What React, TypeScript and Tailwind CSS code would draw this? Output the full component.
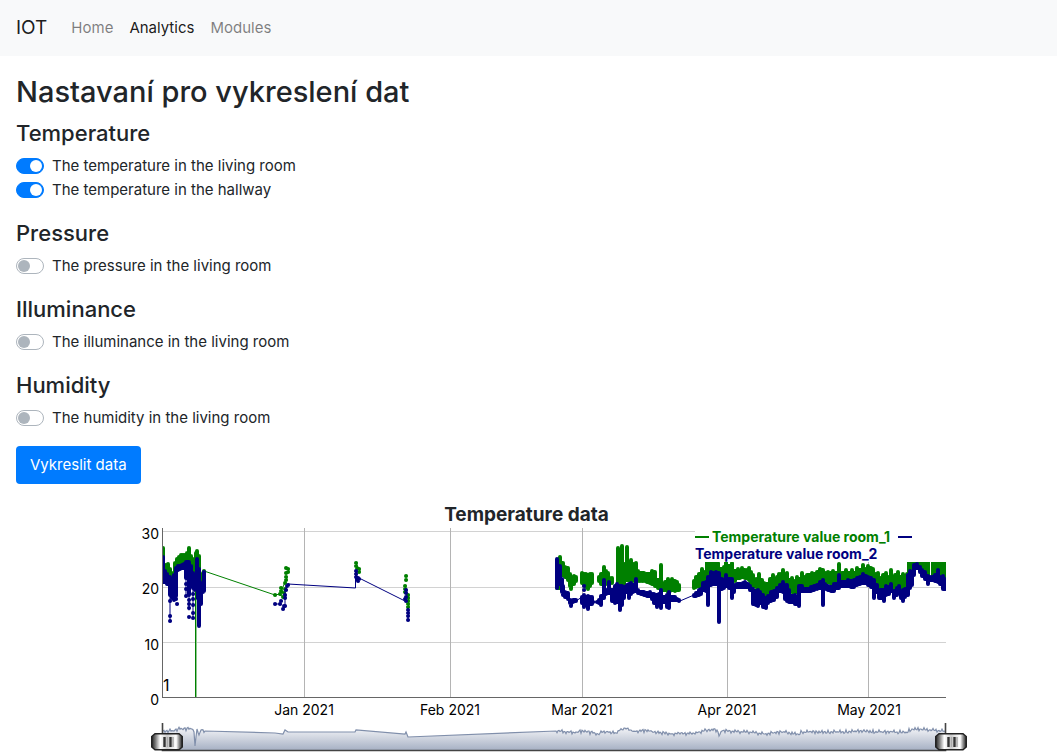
import React from "react";

type Band = [x: number, top: number, bottom: number];
type Point = [x: number, y: number];

const ROOM_1: Band[] = [
  [163, 546, 575], [165, 563, 580], [168, 562, 578], [170, 567, 582], [172, 571, 585], [174, 575, 583],
  [175, 561, 580], [177, 557, 572], [179, 555, 568], [181, 553, 566], [183, 553, 564], [185, 553, 562],
  [187, 551, 562], [189, 546, 560], [191, 554, 568], [193, 557, 570], [195, 560, 575], [196, 551, 575],
  [197, 549, 570], [199, 554, 575], [201, 573, 587], [203, 571, 582], [204, 569, 575],
  [557, 560, 590], [560, 555, 590], [563, 561, 577], [565, 565, 579], [568, 566, 582], [570, 572, 588],
  [571, 575, 591], [574, 574, 586], [576, 575, 583],
  [582, 571, 585], [584, 572, 587], [586, 572, 589], [588, 573, 591], [590, 572, 588], [592, 572, 585],
  [599, 575, 583], [601, 572, 586], [604, 565, 587], [606, 569, 586], [608, 571, 584], [612, 576, 585],
  [618, 546, 590], [620, 552, 588], [622, 544, 590], [624, 562, 586], [627, 545, 582], [629, 560, 582],
  [631, 558, 582], [633, 562, 583], [636, 561, 582], [638, 569, 583], [641, 571, 583], [644, 571, 583],
  [647, 572, 584], [650, 572, 585], [652, 569, 586], [655, 570, 588], [658, 578, 590], [661, 563, 593],
  [663, 582, 592], [665, 580, 592], [668, 577, 594], [670, 580, 593], [672, 577, 592], [675, 579, 593],
  [677, 580, 592], [679, 583, 592],
  [694, 579, 590], [696, 575, 589], [699, 572, 588], [702, 567, 588], [704, 570, 585], [707, 560, 580],
  [710, 560, 580], [713, 560, 580], [716, 560, 580], [718, 561, 580], [721, 567, 582], [724, 565, 580],
  [726, 560, 580], [729, 564, 580], [732, 561, 580], [735, 569, 583], [738, 567, 580], [740, 569, 580],
  [742, 566, 579], [745, 568, 580], [749, 566, 582], [751, 570, 586], [753, 573, 588], [757, 577, 590],
  [759, 572, 590], [762, 578, 594], [764, 581, 597], [767, 582, 598], [770, 577, 595], [773, 573, 592],
  [775, 577, 590], [777, 575, 589], [779, 572, 586], [783, 568, 584], [785, 572, 585], [787, 571, 588],
  [790, 578, 592], [792, 576, 594], [794, 579, 595], [797, 575, 594], [799, 577, 588], [802, 571, 586],
  [804, 575, 588], [807, 573, 588], [810, 573, 588], [812, 571, 587], [815, 572, 586], [817, 570, 585],
  [820, 567, 584], [823, 568, 583], [825, 571, 584], [828, 570, 584], [831, 571, 586], [833, 569, 585],
  [836, 571, 584], [839, 562, 580], [841, 571, 582], [844, 571, 582], [846, 568, 581], [849, 571, 581],
  [852, 568, 580], [855, 571, 580], [857, 566, 579], [860, 568, 578], [863, 563, 578], [865, 567, 578],
  [868, 564, 578], [871, 566, 580], [873, 567, 583], [875, 572, 585], [878, 571, 588], [880, 576, 590],
  [883, 573, 590], [886, 571, 588], [888, 575, 587], [891, 568, 585], [893, 576, 590], [895, 573, 592],
  [898, 570, 588], [901, 575, 590], [903, 572, 592], [905, 577, 590], [907, 572, 588], [909, 560, 580],
  [911, 560, 576], [914, 560, 572], [917, 560, 570], [920, 560, 572], [923, 560, 576], [926, 560, 580],
  [928, 560, 582], [933, 560, 578], [936, 560, 578], [939, 560, 576], [942, 560, 578], [945, 560, 582],
];

const ROOM_2: Band[] = [
  [163, 555, 584], [165, 569, 584], [167, 572, 586], [170, 575, 597], [172, 580, 600], [174, 573, 602],
  [176, 566, 598], [178, 564, 572], [180, 564, 571], [182, 563, 570], [184, 562, 570], [186, 560, 580],
  [189, 560, 597], [191, 564, 583], [193, 571, 590], [195, 574, 592], [197, 557, 605], [199, 567, 628],
  [201, 588, 606], [203, 580, 594], [204, 570, 593],
  [557, 557, 590], [560, 564, 586], [562, 577, 594], [563, 584, 597], [565, 590, 599], [568, 591, 601],
  [570, 598, 605], [571, 600, 608], [573, 598, 604], [576, 598, 603],
  [582, 595, 605], [584, 593, 609], [586, 595, 607], [588, 594, 611], [590, 595, 606], [592, 595, 606],
  [599, 598, 605], [601, 594, 607], [604, 578, 600], [606, 588, 596], [609, 580, 595], [612, 588, 603],
  [615, 584, 605], [617, 582, 604], [620, 584, 612], [622, 584, 607], [624, 585, 600], [627, 583, 594],
  [629, 582, 600], [631, 581, 596], [633, 583, 594], [636, 577, 593], [638, 588, 595], [641, 590, 596],
  [644, 590, 597], [647, 591, 598], [650, 590, 598], [652, 592, 601], [654, 592, 605], [657, 593, 609],
  [659, 592, 604], [661, 588, 610], [664, 595, 604], [667, 593, 609], [669, 590, 610], [672, 595, 602],
  [675, 595, 602], [677, 597, 602], [679, 598, 602],
  [694, 593, 597], [696, 591, 598], [699, 588, 597], [701, 587, 596], [703, 581, 592], [706, 580, 593],
  [708, 575, 607], [711, 570, 587], [713, 571, 586], [716, 570, 586], [719, 571, 624], [722, 577, 591],
  [724, 578, 590], [726, 573, 588], [729, 577, 590], [732, 577, 600], [734, 583, 594], [737, 582, 589],
  [740, 582, 589], [743, 581, 589], [745, 580, 589], [748, 582, 589], [750, 584, 592], [753, 587, 606],
  [756, 589, 607], [758, 588, 608], [760, 590, 605], [763, 593, 609], [766, 596, 610], [768, 594, 605],
  [771, 590, 603], [774, 589, 602], [777, 586, 599], [780, 583, 593], [783, 580, 594], [785, 583, 601],
  [787, 583, 603], [789, 588, 604], [792, 594, 604], [795, 593, 606], [797, 596, 606], [799, 584, 608],
  [802, 584, 593], [805, 587, 593], [808, 587, 593], [811, 585, 593], [814, 584, 592], [817, 583, 591],
  [820, 580, 590], [823, 578, 607], [825, 582, 591], [828, 584, 592], [831, 585, 593], [834, 582, 593],
  [836, 582, 590], [839, 573, 590], [842, 580, 588], [845, 580, 588], [848, 578, 588], [851, 579, 589],
  [854, 578, 589], [857, 576, 587], [860, 575, 586], [863, 572, 585], [866, 574, 585], [868, 575, 587],
  [871, 576, 589], [874, 578, 600], [877, 583, 594], [879, 588, 600], [881, 588, 600], [884, 588, 603],
  [886, 584, 597], [889, 585, 596], [891, 582, 593], [894, 589, 600], [897, 586, 597], [899, 584, 593],
  [901, 589, 600], [903, 588, 603], [905, 587, 599], [908, 573, 597], [910, 569, 590], [912, 570, 587],
  [914, 563, 577], [917, 562, 570], [920, 565, 574], [922, 568, 578], [925, 570, 581], [928, 574, 586],
  [932, 575, 582], [935, 573, 583], [938, 568, 584], [940, 575, 586], [943, 574, 591], [945, 577, 591],
];

const ROOM_1_SPARSE: Point[] = [
  [275, 595], [280, 594], [281, 591], [281, 588], [283, 597], [284, 593], [285, 589], [285, 583], [286, 580],
  [286, 577], [286, 573], [286, 568], [288, 569], [288, 572], [356, 563], [356, 566], [357, 568], [359, 569],
  [359, 572], [406, 576], [406, 580], [405, 586], [405, 589], [405, 592], [408, 595], [408, 598], [408, 601],
  [408, 604], [408, 607],
];

const ROOM_2_SPARSE: Point[] = [
  [170, 601], [170, 616], [170, 621], [176, 599], [177, 604], [189, 600], [189, 604], [189, 608], [189, 617],
  [186, 584], [186, 589], [186, 596], [193, 594], [193, 599], [193, 605], [193, 613], [193, 618], [275, 604],
  [280, 604], [281, 601], [283, 609], [284, 606], [285, 606], [285, 598], [285, 595], [286, 590], [287, 586],
  [288, 585], [356, 571], [356, 574], [356, 577], [357, 580], [358, 578], [358, 581], [359, 579], [406, 590],
  [406, 593], [406, 597], [405, 599], [406, 601], [408, 610], [408, 613], [408, 616], [408, 620], [584, 586],
  [584, 590], [593, 602], [597, 602],
];

const OVERVIEW_BASE: Point[] = [
  [163, 731], [174, 731], [178, 729], [192, 729], [194, 732], [195, 746], [197, 729], [199, 735], [201, 730],
  [205, 731], [275, 733], [283, 734], [285, 730], [288, 732], [355, 732], [356, 730], [405, 734], [406, 732],
  [408, 737], [556, 731], [575, 733], [583, 731], [598, 734], [604, 731], [616, 733], [620, 730], [626, 729],
  [632, 731], [650, 731], [661, 733], [680, 734], [693, 733], [708, 730], [717, 730], [719, 736], [722, 731],
  [750, 732], [765, 734], [783, 732], [798, 734], [802, 732], [839, 732], [863, 731], [882, 732], [906, 732],
  [912, 729], [920, 729], [932, 730], [945, 731],
];

const QUIET_FROM = 205;
const QUIET_TO = 556;

function overviewPoints(): Point[] {
  const out: Point[] = [];
  OVERVIEW_BASE.forEach(([x, y], i) => {
    out.push([x, y]);
    const next = OVERVIEW_BASE[i + 1];
    if (!next || (x >= QUIET_FROM && x < QUIET_TO)) return;
    for (let px = x + 1; px < next[0]; px += 1) {
      const t = (px - x) / (next[0] - x);
      const ripple = Math.sin(px * 2.1) * 1.1 + Math.sin(px * px * 0.7) * 0.9;
      out.push([px, y + (next[1] - y) * t + ripple]);
    }
  });
  return out;
}

function bandPath(bands: Band[]): string {
  const parts: string[] = [];
  bands.forEach(([x, top, bottom], i) => {
    parts.push(`M${x} ${top + 2}V${Math.max(bottom - 2, top + 3)}`);
    const next = bands[i + 1];
    if (next && next[0] - x <= 4) {
      const a = Math.max(top, next[1]) + 2;
      const b = Math.min(bottom, next[2]) - 2;
      if (b > a) parts.push(`M${(x + next[0]) / 2} ${a}V${b}`);
    }
  });
  return parts.join("");
}

const dotPath = (points: Point[]) => points.map(([x, y]) => `M${x} ${y}h.1`).join("");

const overview = "M" + overviewPoints().map(([x, y]) => `${x} ${y.toFixed(1)}`).join("L");

function Handle({ x }: { x: number }) {
  return (
    <g transform={`translate(${x} 733)`}>
      <path d="M4 .7H28L31.3 3.5V14L28 16.8H4L.7 14V3.5Z" fill="url(#metal)" stroke="#222" strokeWidth="1.4" />
      <path d="M13.5 4V14M19.5 4V14" stroke="#333" strokeWidth="2.4" />
      <path d="M16.5 4V14M22 4V14" stroke="#aaa" strokeWidth="1.6" />
    </g>
  );
}

function TemperatureChart() {
  return (
    <svg viewBox="106 528 861 224" className="block w-full overflow-visible" role="img" aria-label="Temperature data">
      <defs>
        <linearGradient id="range" x1="0" y1="0" x2="0" y2="1">
          <stop offset="0" stopColor="#f4f5f8" />
          <stop offset="1" stopColor="#a7b1c4" />
        </linearGradient>
        <linearGradient id="metal">
          <stop offset="0" stopColor="#222" />
          <stop offset=".12" stopColor="#777" />
          <stop offset=".28" stopColor="#fff" />
          <stop offset=".5" stopColor="#ccc" />
          <stop offset=".8" stopColor="#fff" />
          <stop offset=".9" stopColor="#888" />
          <stop offset="1" stopColor="#222" />
        </linearGradient>
        <clipPath id="plot">
          <path d="M162 528H695V562H946V698H162Z" />
        </clipPath>
      </defs>

      <path d="M163 531.5H695M163 587.5H946M163 642.5H946" stroke="#d2d2d2" />
      <path d="M304.5 528V697M450.5 528V697M582.5 528V697M727.5 562V697M868.5 562V697" stroke="#b4b4b4" />

      <g clipPath="url(#plot)" fill="none" strokeLinecap="round">
        <g stroke="#008000">
          <path d="M204 571L275 595L280 594L286 580" strokeWidth="1" />
          <path d={bandPath(ROOM_1)} strokeWidth="4" />
          <path d={dotPath(ROOM_1_SPARSE)} strokeWidth="4" />
        </g>
        <g stroke="#000080">
          <path
            d="M170 590V620M186 575V597M189 590V610M193 585V618M275 604H281M285 607V590L288 584L355.5 588V572M359 578L405 601M408 608V620M576 601L582 597M592 602H599M680 601L694 595"
            strokeWidth="1"
          />
          <path d={bandPath(ROOM_2)} strokeWidth="4" />
          <path d={dotPath(ROOM_2_SPARSE)} strokeWidth="4" />
        </g>
        <path d="M195.5 592V697" stroke="#008000" strokeWidth="1" />
        <path d="M196.5 600V697" stroke="#8fc88f" strokeWidth="1" />
      </g>

      <path d="M162.5 528V698M162 697.5H946" stroke="#666" fill="none" />

      <g fill="#000" fontSize="14">
        <g textAnchor="end">
          <text x="159" y="539">30</text>
          <text x="159" y="594">20</text>
          <text x="159" y="650">10</text>
          <text x="159" y="705">0</text>
        </g>
        <g textAnchor="middle">
          <text x="304" y="715">Jan 2021</text>
          <text x="450" y="715">Feb 2021</text>
          <text x="582" y="715">Mar 2021</text>
          <text x="727" y="715">Apr 2021</text>
          <text x="869" y="715">May 2021</text>
        </g>
        <text x="163" y="691" fontSize="16">1</text>
      </g>

      <g fontSize="14" fontWeight="700">
        <path d="M695 537H709" stroke="#008000" strokeWidth="2" />
        <text x="712" y="542" fill="#008000">Temperature value room_1</text>
        <path d="M898 537H912" stroke="#000080" strokeWidth="2" />
        <text x="695" y="559" fill="#000080">Temperature value room_2</text>
      </g>

      <path d={`${overview}V750H163Z`} fill="url(#range)" />
      <path d={overview} fill="none" stroke="#808fab" strokeWidth="1.2" />
      <path d="M162.5 723V750.5H945.5V723" fill="none" stroke="#444" strokeWidth="1.6" />
      <Handle x={151} />
      <Handle x={935} />
    </svg>
  );
}

const GROUPS = [
  {
    title: "Temperature",
    options: [
      { id: "temp-living", label: "The temperature in the living room", on: true },
      { id: "temp-hallway", label: "The temperature in the hallway", on: true },
    ],
  },
  { title: "Pressure", options: [{ id: "pressure-living", label: "The pressure in the living room", on: false }] },
  { title: "Illuminance", options: [{ id: "illuminance-living", label: "The illuminance in the living room", on: false }] },
  { title: "Humidity", options: [{ id: "humidity-living", label: "The humidity in the living room", on: false }] },
];

export default function App() {
  return (
    <div className="min-h-screen overflow-x-hidden bg-white font-['Inter','Liberation_Sans',sans-serif] text-[15px] leading-6 text-[#212529]">
      <nav className="flex h-14 items-center bg-[#f8f9fa] px-4">
        <a href="#" className="mr-6 text-[19px] text-black/90">IOT</a>
        <div className="flex gap-4">
          <a href="#home" className="text-black/50">Home</a>
          <a href="#analytics" aria-current="page" className="text-black/90">Analytics</a>
          <a href="#modules" className="text-black/50">Modules</a>
        </div>
      </nav>

      <main className="pt-4">
        <form className="px-4" onSubmit={(e) => e.preventDefault()}>
          <h2 className="mb-1.5 text-[29px] leading-10 font-medium">Nastavaní pro vykreslení dat</h2>
          {GROUPS.map((group) => (
            <fieldset key={group.title} className="mb-4">
              <legend className="mb-1.5 text-[22px] leading-[30px] font-medium">{group.title}</legend>
              {group.options.map((option) => (
                <div key={option.id} className="flex h-6 items-center gap-2">
                  <input
                    id={option.id}
                    type="checkbox"
                    role="switch"
                    defaultChecked={option.on}
                    className="flex h-4 w-7 shrink-0 appearance-none items-center rounded-full border border-[#adb5bd] bg-white px-px before:size-3 before:rounded-full before:bg-[#adb5bd] checked:justify-end checked:border-[#007bff] checked:bg-[#007bff] checked:before:bg-white"
                  />
                  <label htmlFor={option.id}>{option.label}</label>
                </div>
              ))}
            </fieldset>
          ))}
          <button type="submit" className="h-[38px] rounded bg-[#007bff] px-[14px] text-white">
            Vykreslit data
          </button>
        </form>

        <figure className="mt-4 pr-[90px] pl-[106px]">
          <figcaption className="pt-0.5 pr-5 text-center text-[19px] leading-[26px] font-bold">Temperature data</figcaption>
          <TemperatureChart />
        </figure>
      </main>
    </div>
  );
}
